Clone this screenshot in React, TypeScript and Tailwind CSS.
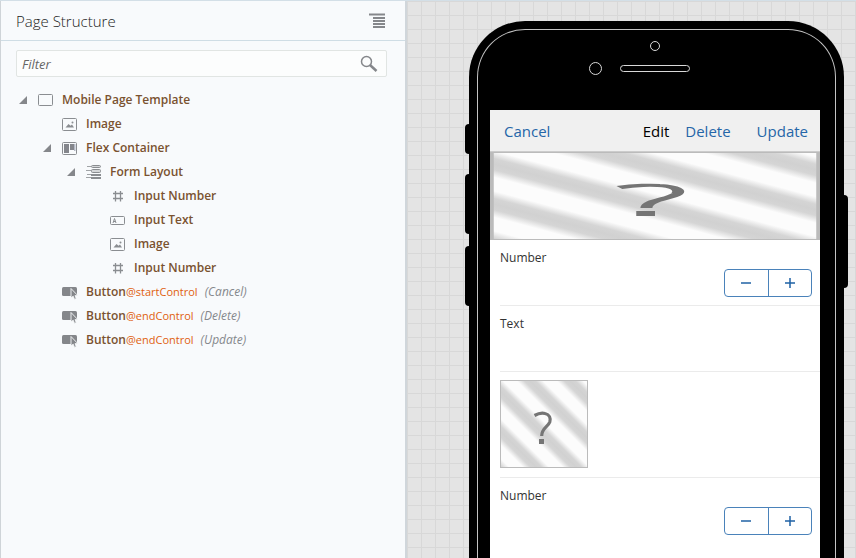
import React from "react";

type IconName = "page" | "image" | "flex" | "form" | "number" | "text" | "button";

interface Node {
  id: number;
  level: number;
  icon: IconName;
  label: string;
  parent?: boolean;
  slot?: string;
  hint?: string;
}

const nodes: Node[] = [
  { id: 1, level: 0, icon: "page", label: "Mobile Page Template", parent: true },
  { id: 2, level: 1, icon: "image", label: "Image" },
  { id: 3, level: 1, icon: "flex", label: "Flex Container", parent: true },
  { id: 4, level: 2, icon: "form", label: "Form Layout", parent: true },
  { id: 5, level: 3, icon: "number", label: "Input Number" },
  { id: 6, level: 3, icon: "text", label: "Input Text" },
  { id: 7, level: 3, icon: "image", label: "Image" },
  { id: 8, level: 3, icon: "number", label: "Input Number" },
  { id: 9, level: 1, icon: "button", label: "Button", slot: "@startControl", hint: "(Cancel)" },
  { id: 10, level: 1, icon: "button", label: "Button", slot: "@endControl", hint: "(Delete)" },
  { id: 11, level: 1, icon: "button", label: "Button", slot: "@endControl", hint: "(Update)" },
];

const indents = ["pl-[17px]", "pl-[41px]", "pl-[65px]", "pl-[89px]"];

function NodeIcon({ name }: { name: IconName }) {
  return (
    <svg width="16" height="16" viewBox="0 0 16 16" fill="none" stroke="#8a8d91" className="shrink-0" aria-hidden="true">
      {name === "page" && <rect x="0.5" y="2.5" width="14" height="11" rx="1" />}
      {name === "image" && (
        <>
          <rect x="0.5" y="2.5" width="14" height="12" rx="1" />
          <path d="M3.5 11.5 6.5 8l2 1.8L10 8.5l2 3z" fill="#8a8d91" stroke="none" />
          <circle cx="10.5" cy="6.5" r="1" fill="#8a8d91" stroke="none" />
        </>
      )}
      {name === "flex" && (
        <>
          <rect x="0.5" y="2.5" width="14" height="12" rx="1" />
          <path d="M2 4h5v9H2zM8 4h4v6H8z" fill="#84868c" stroke="none" />
          <path d="M12 4h1.500v7H12z" fill="#b4b9c6" stroke="none" />
        </>
      )}
      {name === "form" && (
        <>
          <path d="M1 2.500h4M0 6.500h5M1 10.500h4M0 13.500h5" stroke="#a0a3a6" />
          <rect x="5.500" y="1.500" width="9" height="2" rx="1" fill="#d4d6d8" />
          <rect x="5.500" y="5.500" width="9" height="3" rx="1" fill="#d4d6d8" />
          <rect x="5.500" y="10.500" width="9" height="1" fill="#d4d6d8" />
          <rect x="5.500" y="13.500" width="9" height="1" fill="#d4d6d8" />
        </>
      )}
      {name === "number" && <path d="M5.500 3v10.500M10.500 3v10.500M3 5.500h10M3 10.500h10" strokeWidth="1.300" />}
      {name === "text" && (
        <>
          <rect x="0.5" y="4.500" width="14" height="8" rx="1" />
          <path d="M3 11l1.500-4.500L6 11M3.500 9.500h2" />
        </>
      )}
      {name === "button" && (
        <>
          <rect x="0" y="3" width="15" height="9" rx="1.500" fill="#84868a" stroke="none" />
          <path d="M9 4.500v9.500l2.200-1.800 1.300 3.200 1.800-.8-1.300-3h2.800z" fill="#84868a" stroke="#f8fafc" strokeWidth="0.900" />
        </>
      )}
    </svg>
  );
}

function TreeRow({ node }: { node: Node }) {
  return (
    <li role="treeitem" aria-level={node.level + 1} className={`flex h-6 items-center ${indents[node.level]}`}>
      <span className="w-5 shrink-0">
        {node.parent && (
          <svg width="10" height="10" viewBox="0 0 10 10" aria-hidden="true">
            <path d="M9 1v8H1z" fill="#85878b" />
          </svg>
        )}
      </span>
      <NodeIcon name={node.icon} />
      <span className="ml-2 font-semibold whitespace-nowrap text-[#7a5230]">{node.label}</span>
      {node.slot && <span className="text-[11px] text-[#e0600f]">{node.slot}</span>}
      {node.hint && <span className="ml-[7px] text-[#85888c] italic">{node.hint}</span>}
    </li>
  );
}

function Placeholder({ id, className }: { id: string; className: string }) {
  return (
    <svg viewBox="0 0 88 88" preserveAspectRatio="none" className={className} role="img" aria-label="Image placeholder">
      <defs>
        <linearGradient id={id} gradientUnits="userSpaceOnUse" x1="0" y1="11" x2="-20" y2="31" spreadMethod="repeat">
          <stop offset="0" stopColor="#d1d1d1" />
          <stop offset="0.14" stopColor="#d5d5d5" />
          <stop offset="0.33" stopColor="#fcfcfc" />
          <stop offset="0.67" stopColor="#fcfcfc" />
          <stop offset="0.86" stopColor="#d5d5d5" />
          <stop offset="1" stopColor="#d1d1d1" />
        </linearGradient>
      </defs>
      <rect x="0.5" y="0.5" width="87" height="87" fill={`url(#${id})`} stroke="#bbbbbb" />
      <path d="M34.500 35.500C39 33 43 33 45 33.500 49.500 34.500 51 38 49.800 42 48 47 41.700 48 41.700 56" fill="none" stroke="#757575" strokeWidth="3.200" />
      <path d="M39 59h5v5h-5z" fill="#757575" />
    </svg>
  );
}

function Stepper({ label }: { label: string }) {
  return (
    <div role="group" aria-label={label} className="mt-px flex h-7 w-[88px] self-end rounded-[4px] border border-[#4a82ba]">
      <button type="button" aria-label="Decrease" className="flex flex-1 items-center justify-center border-r border-[#4a82ba]">
        <svg width="12" height="12" viewBox="0 0 12 12" aria-hidden="true">
          <path d="M1 6h10" stroke="#1f62a5" strokeWidth="1.500" />
        </svg>
      </button>
      <button type="button" aria-label="Increase" className="flex flex-1 items-center justify-center">
        <svg width="12" height="12" viewBox="0 0 12 12" aria-hidden="true">
          <path d="M1 6h10M6 1v10" stroke="#1f62a5" strokeWidth="1.500" />
        </svg>
      </button>
    </div>
  );
}

function NumberField() {
  return (
    <div className="ml-[10px] flex h-[66px] flex-col border-b border-[#ebebeb] pt-2 pr-2 last:border-b-0">
      <span className="text-xs leading-5">Number</span>
      <Stepper label="Number" />
    </div>
  );
}

function Phone() {
  return (
    <div className="relative flex min-h-[720px] flex-col rounded-t-[56px] bg-black px-2 pt-2">
      <span className="absolute top-[103px] -left-1 h-[30px] w-2 rounded-l bg-black" />
      <span className="absolute top-[153px] -left-1 h-[60px] w-2 rounded-l bg-black" />
      <span className="absolute top-[225px] -left-1 h-[60px] w-2 rounded-l bg-black" />
      <span className="absolute top-[174px] -right-1 h-[93px] w-2 rounded-r bg-black" />
      <div className="flex flex-1 flex-col rounded-t-[48px] border border-b-0 border-[#c4c4c4] pr-[15px] pl-3">
        <div className="flex h-20 flex-col items-center pt-[11px]">
          <span className="size-[10px] rounded-full border border-[#d8d8d8]" />
          <div className="mt-[11px] flex items-center gap-[18px] pr-8">
            <span className="size-[13px] rounded-full border border-[#d8d8d8]" />
            <span className="h-[7px] w-[70px] rounded-full border border-[#d8d8d8]" />
          </div>
        </div>
        <main className="flex flex-1 flex-col bg-white text-[#333]">
          <header className="flex h-[42px] items-center border-b border-[#cccccc] bg-[#f0f0f0] pt-[2px] pr-3 pl-[14px] text-[15px] text-[#2566a8]">
            <button type="button">Cancel</button>
            <h2 className="mr-4 ml-auto text-black">Edit</h2>
            <button type="button" className="mr-[26px]">Delete</button>
            <button type="button">Update</button>
          </header>
          <Placeholder id="banner" className="h-[88px] w-full" />
          <NumberField />
          <div className="ml-[10px] h-[66px] border-b border-[#ebebeb] pt-2">
            <span className="block text-xs leading-5">Text</span>
          </div>
          <div className="ml-[10px] h-[106px] border-b border-[#ebebeb] pt-2">
            <Placeholder id="picture" className="size-[88px]" />
          </div>
          <NumberField />
        </main>
      </div>
    </div>
  );
}

export default function App() {
  return (
    <div className="flex h-screen overflow-hidden border-t border-[#d3dfe7] bg-[#f8fafc] font-['Open_Sans','Noto_Sans',sans-serif]">
      <aside className="flex w-[407px] shrink-0 flex-col border-r-2 border-l border-r-[#d0d6db] border-l-[#cfd4d8] text-xs">
        <header className="flex h-10 items-center justify-between border-b border-[#cfdde5] pr-5 pl-[15px]">
          <h1 className="text-[15px] font-light text-[#222]">Page Structure</h1>
          <button type="button" aria-label="Structure options">
            <svg width="16" height="16" viewBox="0 0 16 16" fill="none" stroke="#85878b" strokeWidth="1.800" aria-hidden="true">
              <path d="M0 1.500h16M4 5h12M4 8h12M4 11h12M4 14h12" />
            </svg>
          </button>
        </header>
        <div className="mt-[9px] mr-[18px] ml-[15px] flex h-[27px] items-center rounded-[2px] border border-[#e1e5e3] bg-[#fcfdfd] pr-2">
          <input aria-label="Filter" placeholder="Filter" className="h-full min-w-0 flex-1 px-[5px] text-[13px] italic outline-none placeholder:text-[#666]" />
          <svg width="18" height="18" viewBox="0 0 18 18" fill="none" stroke="#85878b" aria-hidden="true">
            <circle cx="6.500" cy="6.500" r="5" strokeWidth="1.500" />
            <path d="M10 10l6.500 6" strokeWidth="2.500" />
          </svg>
        </div>
        <ul role="tree" aria-label="Page structure" className="mt-[11px]">
          {nodes.map((node) => (
            <TreeRow key={node.id} node={node} />
          ))}
        </ul>
      </aside>
      <section
        aria-label="Canvas"
        className="min-w-0 flex-1 overflow-hidden bg-[#e4e4e4] bg-[linear-gradient(to_right,#d8d8d8_1px,transparent_1px),linear-gradient(to_bottom,#d8d8d8_1px,transparent_1px)] bg-size-[14px_14px] pt-5 pr-3 pl-[62px]"
      >
        <Phone />
      </section>
    </div>
  );
}
